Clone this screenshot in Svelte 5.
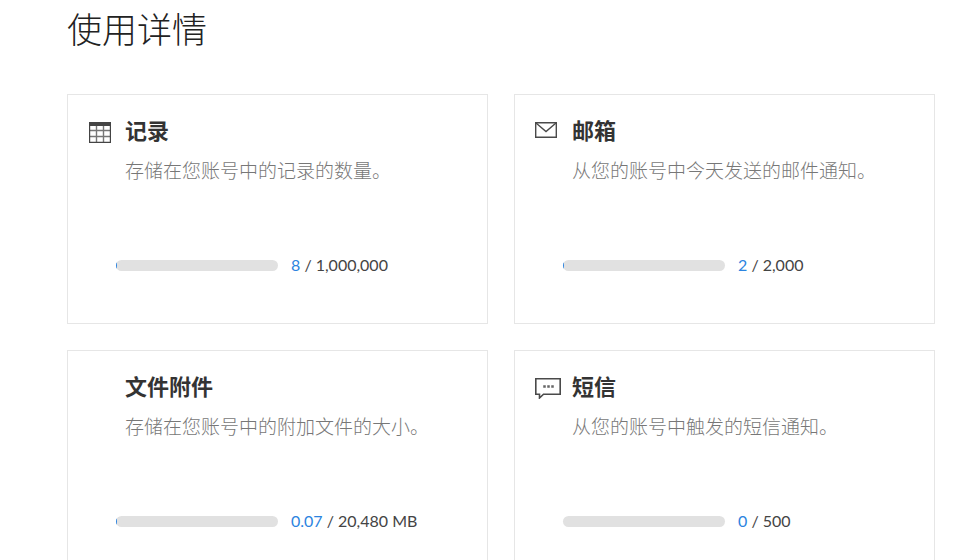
<script lang="ts">
  type Usage = {
    icon: 'table' | 'mail' | 'sms' | null;
    title: string;
    description: string;
    used: number;
    limit: number;
    unit?: string;
  };

  const usages: Usage[] = [
    { icon: 'table', title: '记录', description: '存储在您账号中的记录的数量。', used: 8, limit: 1000000 },
    { icon: 'mail', title: '邮箱', description: '从您的账号中今天发送的邮件通知。', used: 2, limit: 2000 },
    { icon: null, title: '文件附件', description: '存储在您账号中的附加文件的大小。', used: 0.07, limit: 20480, unit: 'MB' },
    { icon: 'sms', title: '短信', description: '从您的账号中触发的短信通知。', used: 0, limit: 500 }
  ];

  // Any usage at all shows at least a sliver of the bar
  function fillWidth(usage: Usage) {
    if (usage.used === 0) return 0;
    return Math.max(0.6, (usage.used / usage.limit) * 100);
  }
</script>

<main class="usage">
  <h1>使用详情</h1>

  <div class="cards">
    {#each usages as usage}
      <section class="card">
        <div class="icon">
          {#if usage.icon === 'table'}
            <svg width="24" height="21" viewBox="-1 0 24 21" fill="none" stroke="#666" aria-hidden="true">
              <path d="M1 8.5h20M1 14.5h20M7.5 4v16M14.5 4v16" stroke="#777" stroke-width="1.4" />
              <path d="M.6 3v17.3h20.8V3" stroke="#444" stroke-width="1.2" />
              <path d="M0 0h22v4H0z" fill="#444" stroke="none" />
            </svg>
          {:else if usage.icon === 'mail'}
            <svg width="22" height="16" viewBox="0 0 22 16" fill="none" stroke="#4a4a4a" stroke-width="1.4" aria-hidden="true">
              <path d="M.7.7h20.6v14.6H.7z" />
              <path d="M1 1l10 8.5L21 1" />
            </svg>
          {:else if usage.icon === 'sms'}
            <svg width="26" height="21" viewBox="0 0 26 21" fill="none" stroke="#4a4a4a" stroke-width="1.6" aria-hidden="true">
              <path d="M.8.8h24.4v15.4H8.5L4.5 20v-3.800H.8z" />
              <path d="M8 7h3v3H8zM12 7h3v3h-3zM16 7h3v3h-3z" fill="#666" stroke="#fff" stroke-width=".5" />
            </svg>
          {/if}
        </div>

        <div class="text">
          <h2>{usage.title}</h2>
          <p>{usage.description}</p>
        </div>

        <div class="meter">
          <div
            class="bar"
            role="progressbar"
            aria-label={usage.title}
            aria-valuenow={usage.used}
            aria-valuemin="0"
            aria-valuemax={usage.limit}
          >
            <div class="fill" style="width: {fillWidth(usage)}%"></div>
          </div>
          <div class="count">
            <span class="used">{usage.used}</span> / {usage.limit.toLocaleString('en-US')}{usage.unit ? ` ${usage.unit}` : ''}
          </div>
        </div>
      </section>
    {/each}
  </div>
</main>

<style>
  :global(body) {
    margin: 0;
    background: #fff;
  }

  .usage {
    padding: 3px 19px 26px 67px;
    color: #333;
    font-family: Lato, 'Noto Sans CJK SC', sans-serif;
  }

  h1 {
    margin: 0 0 39px;
    color: #222;
    font-size: 35px;
    font-weight: 300;
    line-height: 52px;
  }

  .cards {
    display: grid;
    grid-template-columns: repeat(2, minmax(0, 1fr));
    gap: 26px;
  }

  .card {
    display: grid;
    grid-template-columns: 37px 1fr;
    align-content: start;
    box-sizing: border-box;
    min-height: 230px;
    padding: 19px 20px;
    border: 1px solid #e6e6e6;
  }

  .icon {
    padding-top: 8px;
  }

  .icon svg {
    display: block;
  }

  h2 {
    margin: 0;
    font-size: 22px;
    font-weight: 700;
    line-height: 34px;
  }

  p {
    margin: 8px 0 0;
    color: #777;
    font-size: 19px;
    font-weight: 300;
    line-height: 30px;
  }

  .meter {
    display: flex;
    grid-column: 1 / -1;
    align-items: center;
    gap: 13px;
    margin-top: 67px;
    padding-left: 28px;
  }

  .bar {
    width: 162px;
    height: 11px;
    overflow: hidden;
    border-radius: 6px;
    background: #e1e1e1;
  }

  .fill {
    height: 100%;
    background: #2c84e0;
  }

  .count {
    color: #444;
    font-size: 16px;
    line-height: 24px;
    white-space: nowrap;
  }

  .used {
    color: #2c84e0;
  }
</style>
